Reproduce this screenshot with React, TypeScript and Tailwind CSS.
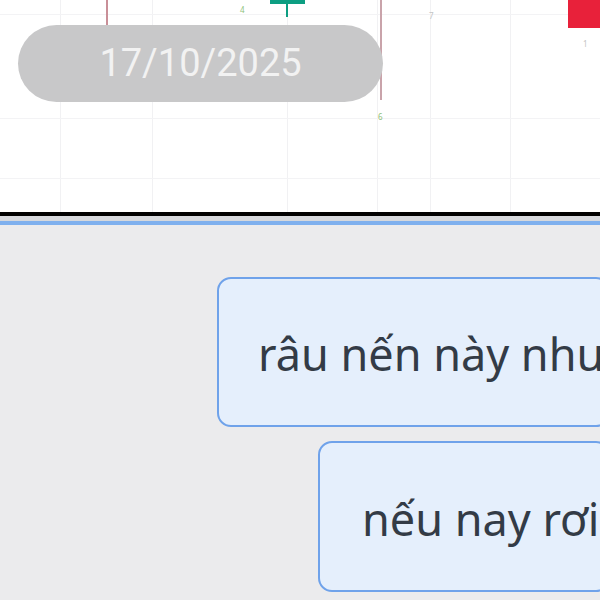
export default function App() {
  return (
    <div className="w-[600px] h-[600px] overflow-hidden bg-[#ebebed] flex flex-col" style={{ fontFamily: '"Noto Sans", sans-serif' }}>
      {/* Chart */}
      <div className="relative w-full h-[212px] bg-white shrink-0 overflow-hidden">
        {/* grid */}
        {[60, 152, 287, 377, 430, 510].map((x) => (
          <div key={x} className="absolute top-0 bottom-0 w-px bg-[#f1f1f3]" style={{ left: x }} />
        ))}
        {[14, 118, 178].map((y) => (
          <div key={y} className="absolute left-0 right-0 h-px bg-[#f3f3f5]" style={{ top: y }} />
        ))}
        {/* candles */}
        <div className="absolute left-[106px] top-0 w-[2px] h-[26px] bg-[#c98f98]" />
        <div className="absolute left-[270px] top-0 w-[35px] h-[4px] bg-[#0d9e82]" />
        <div className="absolute left-[286px] top-0 w-[2px] h-[17px] bg-[#0d9e82]" />
        <div className="absolute left-[380px] top-0 w-[2px] h-[100px] bg-[#c9a3aa]" />
        <div className="absolute left-[568px] top-0 w-[40px] h-[28px] bg-[#e8213a]" />
        <span className="absolute left-[240px] top-[4px] text-[8px] text-[#8fbf7a]">4</span>
        <span className="absolute left-[429px] top-[10px] text-[8px] text-[#c4c4c4]">7</span>
        <span className="absolute left-[378px] top-[111px] text-[8px] text-[#8fbf7a]">6</span>
        <span className="absolute left-[583px] top-[38px] text-[8px] text-[#c4c4c4]">1</span>
        {/* date pill */}
        <div className="absolute left-[18px] top-[25px] w-[365px] h-[77px] rounded-full bg-[#c8c8c9] flex items-center justify-center">
          <span className="text-[38px] text-[#f2f2f2]" style={{ fontFamily: 'Roboto, sans-serif' }}>17/10/2025</span>
        </div>
      </div>
      <div className="h-[4px] bg-black shrink-0" />
      <div className="h-[5px] bg-[#d6d8dc] shrink-0" />
      <div className="h-[4px] bg-[#7fb0ee] shrink-0" />
      {/* Chat */}
      <div className="flex-1 flex flex-col items-end pt-[52px] gap-[14px]">
        <div className="w-[393px] h-[150px] -mr-[10px] rounded-[14px] border-2 border-[#6fa2ea] bg-[#e5effc] flex items-center pl-[39px] overflow-hidden">
          <span className="text-[45px] text-[#333b46] whitespace-nowrap pt-[4px]">râu nến này như</span>
        </div>
        <div className="w-[292px] h-[151px] -mr-[10px] rounded-[14px] border-2 border-[#6fa2ea] bg-[#e5effc] flex items-center pl-[42px] overflow-hidden">
          <span className="text-[45px] text-[#333b46] whitespace-nowrap pt-[4px]">nếu nay rơi</span>
        </div>
      </div>
    </div>
  );
}
